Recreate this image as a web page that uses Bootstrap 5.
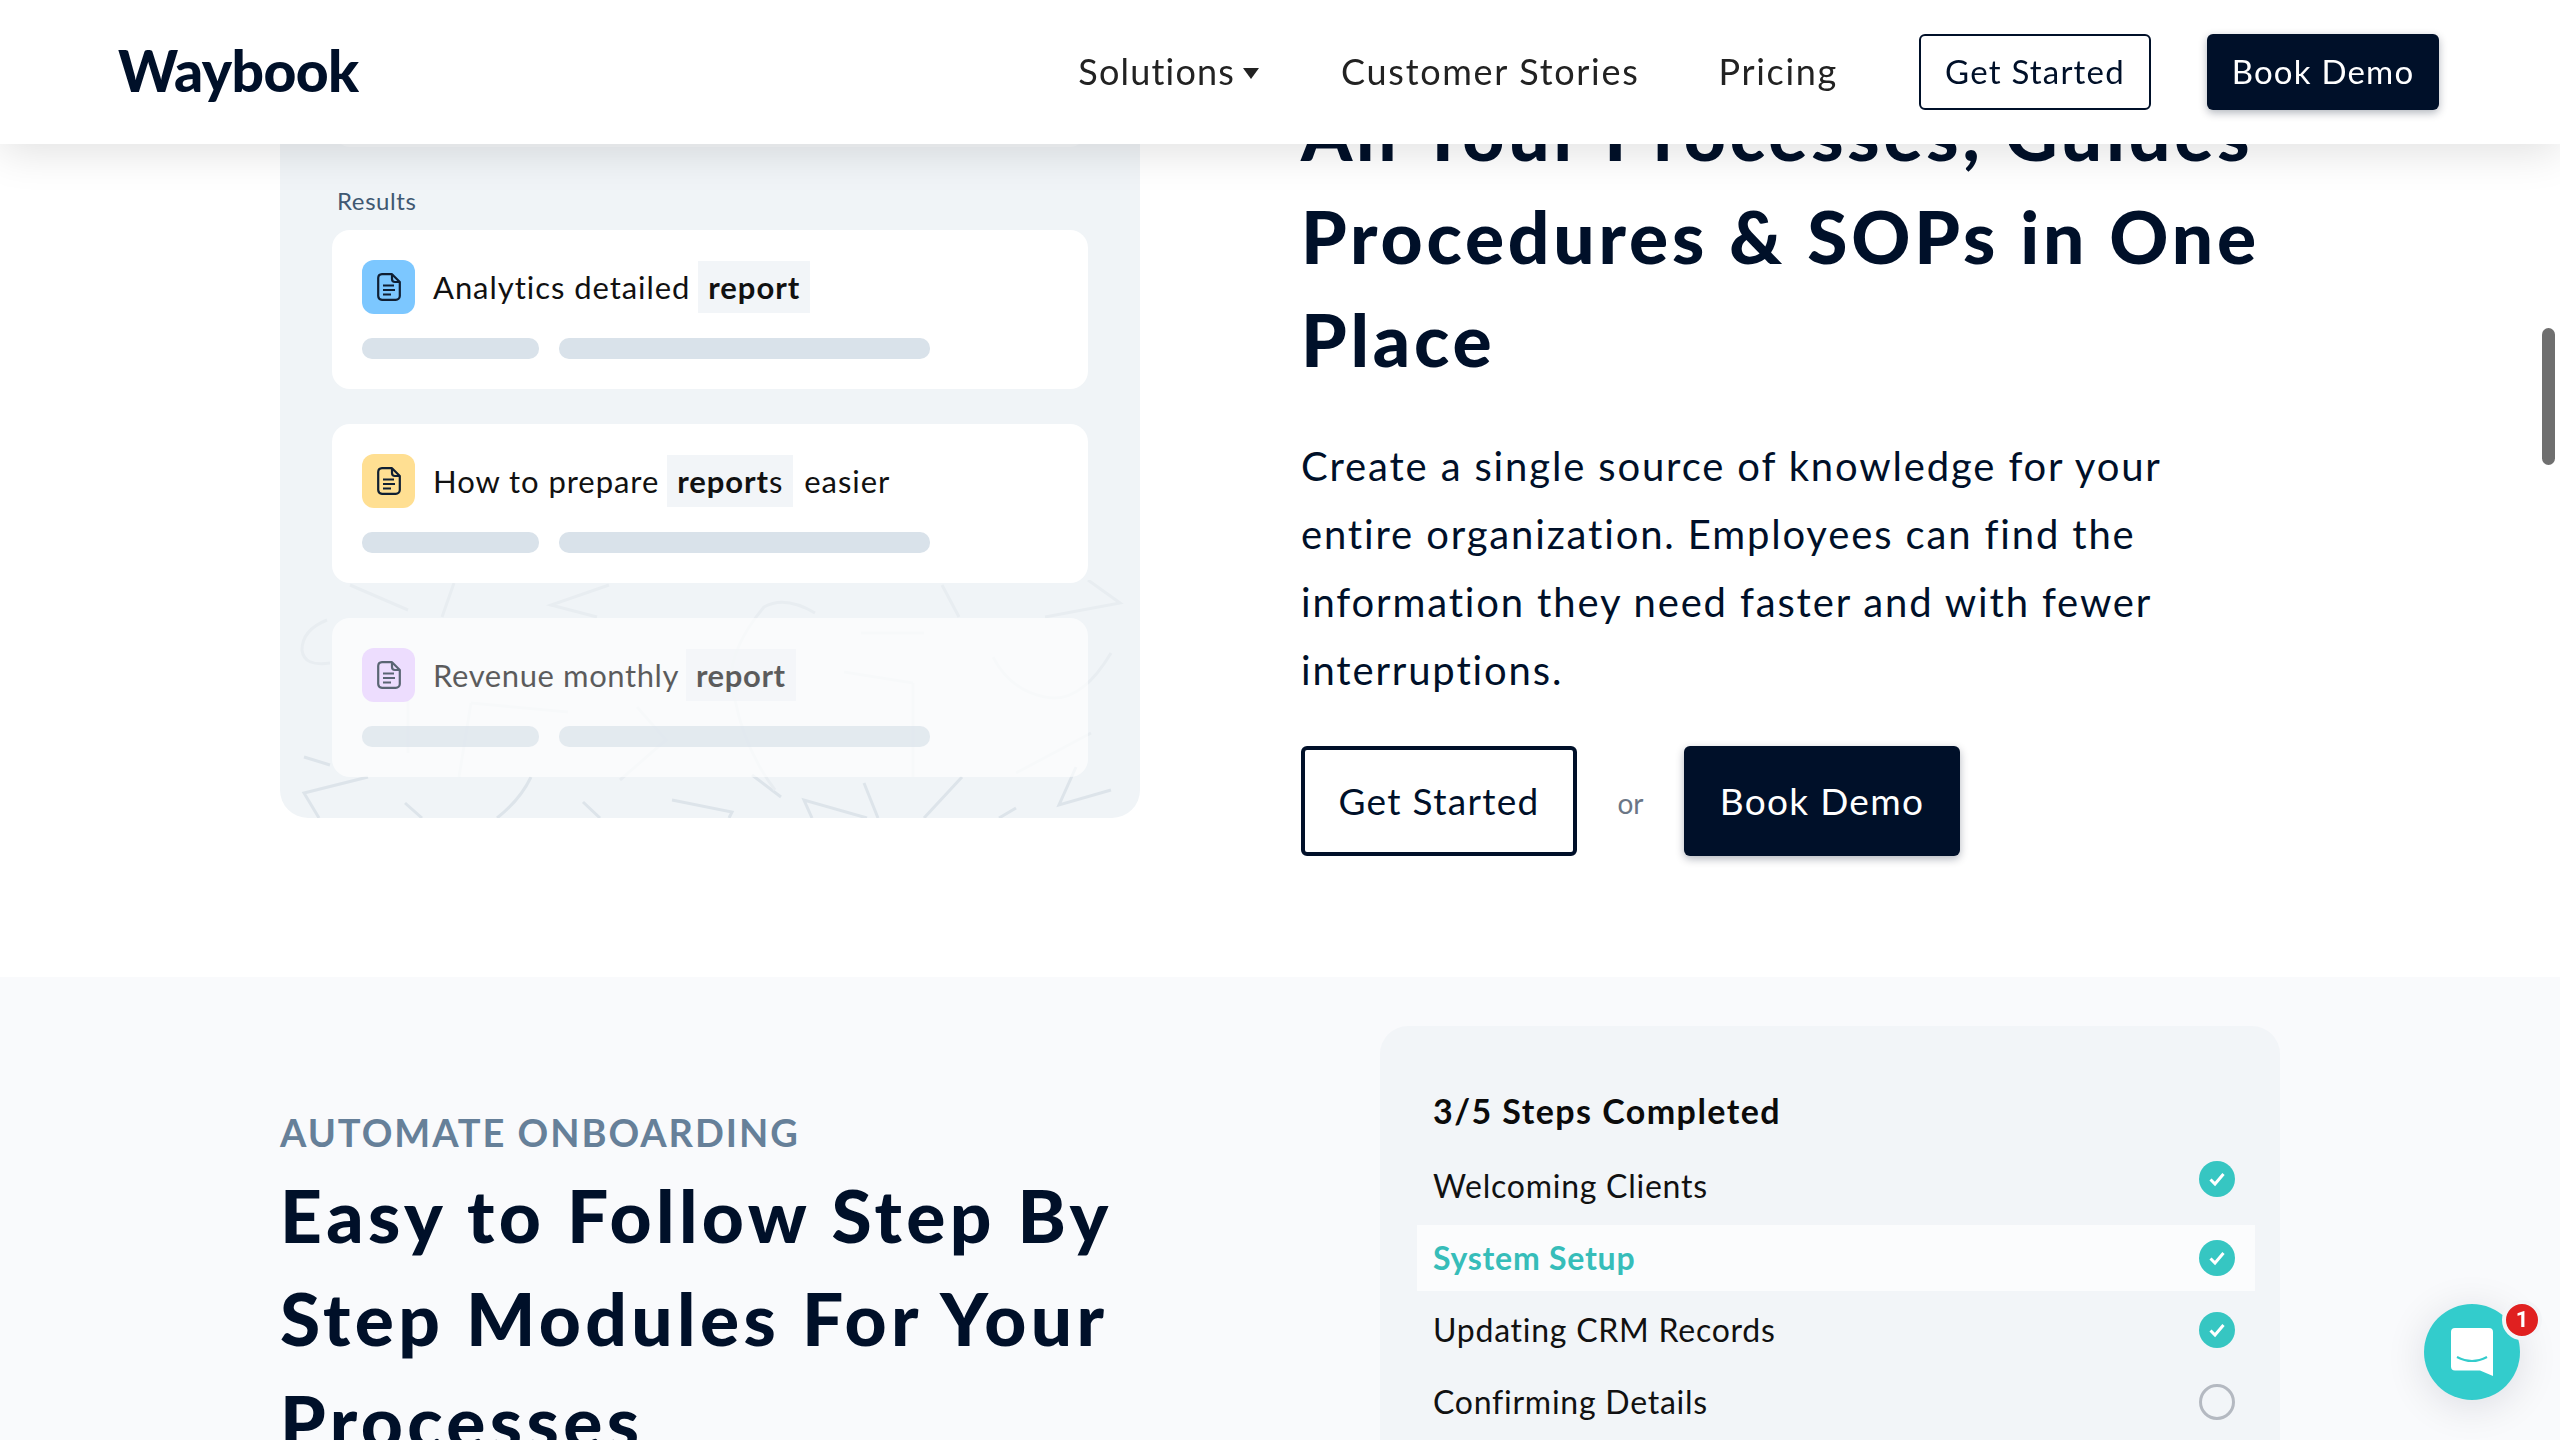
<!DOCTYPE html>
<html lang="en">
<head>
    <meta charset="UTF-8">
    <meta name="viewport" content="width=device-width, initial-scale=1.0">
    <title>Waybook</title>
    <link rel="stylesheet" href="https://cdn.jsdelivr.net/npm/bootstrap@5.3.0/dist/css/bootstrap.min.css">
    <style>
        html, body { height: 100%; overflow: hidden; }
        body { font-family: Lato, "Open Sans", sans-serif; color: #001029; background: #fff; }

        /* top bar */
        .wb-bar { height: 144px; padding: 0 121px 0 118px; box-shadow: 0 8px 40px rgba(0, 0, 0, .12); }
        .wb-logo { font-size: 57px; font-weight: 900; letter-spacing: -.6px; line-height: 1; color: #001029; text-decoration: none; padding-bottom: 3px; }
        .wb-link { font-size: 36px; color: #222; text-decoration: none; letter-spacing: 1.7px; white-space: nowrap; padding-bottom: 2px; }
        .wb-sol { letter-spacing: 1.2px; }
        .wb-l2 { margin-left: 82px; }
        .wb-l3 { margin-left: 79px; }
        .wb-l4 { margin-left: 81px; }
        .wb-l5 { margin-left: 56px; }
        .wb-caret { display: inline-block; width: 0; height: 0; border: 8px solid transparent; border-top: 11px solid #222; border-bottom: 0; margin-left: 8px; vertical-align: 6px; }
        .wb-btn { display: inline-flex; align-items: center; justify-content: center; border-radius: 6px; font-weight: 400; }
        .wb-btn-sm { width: 232px; height: 76px; font-size: 33px; letter-spacing: 1.2px; }
        .wb-btn-lg { width: 276px; height: 110px; font-size: 37px; letter-spacing: 1.3px; }
        .wb-out { background: #fff; color: #001029; border: 2px solid #001029; }
        .wb-btn-lg.wb-out { border-width: 4px; }
        .wb-fill { background: #001029; color: #fff; border: 0; box-shadow: 0 3px 8px rgba(0, 16, 41, .3); }

        .wb-page { margin-top: -60px; }
        .wb-wrap { width: 2000px; margin-left: 280px; }

        /* results panel */
        .wb-hero { height: 1037px; }
        .wb-panel { width: 860px; height: 878px; background: #f0f4f7; border-radius: 0 0 28px 28px; padding: 30px 52px 0; position: relative; overflow: hidden; }
        .wb-scribble { position: absolute; left: 0; bottom: 0; width: 860px; height: 238px; }
        .wb-search { height: 177px; margin: 0 2px; border-radius: 0 0 16px 16px; background: #f6f8fa; }
        .wb-results { font-size: 24px; color: #3f5872; margin: 39px 0 2px 5px; line-height: 30px; height: 42px; letter-spacing: .6px; }
        .wb-item { position: relative; height: 159px; background: #fff; border-radius: 18px; margin-bottom: 35px; padding: 30px 30px 0; }
        .wb-item.wb-faded { background: rgba(255, 255, 255, .66); }
        .wb-faded .wb-inner { opacity: .68; }
        .wb-ico { width: 53px; height: 54px; border-radius: 12px; flex: none; display: flex; align-items: center; justify-content: center; }
        .wb-blue { background: #7cc7ff; }
        .wb-yellow { background: #ffdf92; }
        .wb-purple { background: #e7cfff; }
        .wb-title { font-size: 31px; color: #111; margin-left: 18px; white-space: nowrap; letter-spacing: .95px; }
        .wb-faded .wb-title { letter-spacing: .6px; }
        .wb-hit { display: inline-block; background: #f2f5f8; font-weight: 700; padding: 0 10px; height: 52px; line-height: 52px; margin: 0 2px 0 -1px; }
        .wb-hit span { font-weight: 400; }
        .wb-skels { display: flex; gap: 20px; margin-top: 24px; }
        .wb-skel { height: 21px; background: #d9e2ea; border-radius: 10px; }
        .wb-skel-a { width: 177px; }
        .wb-skel-b { width: 371px; }

        /* hero copy */
        .wb-copy { width: 978px; margin-left: 161px; padding-top: 142px; flex: none; }
        .wb-head { font-size: 73px; line-height: 103px; font-weight: 900; color: #001029; margin: 0; letter-spacing: 3.8px; }
        .wb-para { font-size: 40px; line-height: 68px; margin: 41px 0 0; width: 900px; letter-spacing: 1.85px; }
        .wb-cta { display: flex; align-items: center; margin-top: 42px; }
        .wb-or { width: 107px; text-align: center; color: #6b7686; font-size: 28px; padding-top: 4px; }

        /* steps section */
        .wb-band { background: #f9fafc; padding-top: 49px; height: 600px; }
        .wb-kicker { font-size: 38px; font-weight: 700; color: #668099; letter-spacing: 1.95px; line-height: 46px; margin: 0 0 9px; }
        .wb-side { width: 1090px; padding-top: 83px; }
        .wb-side .wb-head { letter-spacing: 4.4px; }
        .wb-steps { width: 900px; height: 600px; background: #f2f5f8; border-radius: 28px; padding: 60px 25px 0 37px; }
        .wb-steps-title { font-size: 34px; font-weight: 700; color: #0b0b0b; line-height: 50px; margin: 0 0 17px 16px; letter-spacing: 1.45px; }
        .wb-row { height: 66px; margin-bottom: 6px; padding: 0 20px 0 16px; font-size: 32px; color: #111; letter-spacing: .75px; }
        .wb-row.wb-on { background: #fbfcfd; color: #36bdb9; font-weight: 700; }
        .wb-up { margin-bottom: 14px; }

        /* scrollbar and chat launcher */
        .wb-thumb { position: fixed; left: 2542px; top: 328px; width: 13px; height: 137px; border-radius: 7px; background: #6f6f6f; }
        .wb-chat { position: fixed; left: 2424px; top: 1304px; width: 96px; height: 96px; border-radius: 50%; background: #33cccc; box-shadow: 0 6px 40px rgba(0, 16, 41, .12); }
        .wb-pip { position: absolute; left: 78px; top: -4px; width: 40px; height: 40px; border-radius: 50%; background: #e02020; border: 4px solid #f3f5f8; color: #fff; font: 700 22px/32px Roboto, sans-serif; text-align: center; }
    </style>
</head>
<body>
    <svg width="0" height="0" class="position-absolute">
        <symbol id="doc" viewBox="0 0 24 28">
            <path d="M5 1.2H15L22.8 9V23a4 4 0 0 1-4 3.8H5a4 4 0 0 1-3.8-3.8V5A4 4 0 0 1 5 1.2z" fill="none" stroke="currentColor" stroke-width="2.2" stroke-linejoin="round"/>
            <path d="M15 1.2V6a3 3 0 0 0 3 3h4.8M6 12.5h11M6 17h12M6 21.5h8" fill="none" stroke="currentColor" stroke-width="2.2"/>
        </symbol>
        <symbol id="tick" viewBox="0 0 36 36">
            <circle cx="18" cy="18" r="18" fill="#36c6c2"/>
            <path d="M11.5 18.5l4.5 4.5 8.5-10" fill="none" stroke="#fff" stroke-width="3"/>
        </symbol>
    </svg>

    <nav class="navbar fixed-top bg-white wb-bar d-flex justify-content-between align-items-center flex-nowrap">
        <a class="wb-logo" href="#">Waybook</a>
        <div class="d-flex align-items-center">
            <a class="wb-link wb-sol" href="#">Solutions<i class="wb-caret"></i></a>
            <a class="wb-link wb-l2" href="#">Customer Stories</a>
            <a class="wb-link wb-l3" href="#">Pricing</a>
            <a class="wb-btn wb-btn-sm wb-out text-decoration-none wb-l4" href="#">Get Started</a>
            <a class="wb-btn wb-btn-sm wb-fill text-decoration-none wb-l5" href="#">Book Demo</a>
        </div>
    </nav>

    <main class="wb-page">
        <section class="wb-hero">
            <div class="wb-wrap d-flex">
                <div class="wb-panel flex-shrink-0">
                    <svg class="wb-scribble" viewBox="0 0 860 238" fill="none" stroke-width="3">
                        <path stroke="#dde4ea" d="M88 197L24 213L39 238M24 177L50 185M125 223L142 238M251 197Q240 220 217 238M303 222L320 238M392 220L452 232L449 238M472 195L501 217M532 238L524 220L587 238M584 203L598 238M682 197L644 238M736 228L719 238M831 210L779 225L796 187"/>
                        <path stroke="#e8edf1" d="M70 5L128 30M174 3L162 37M329 5L271 25L317 37M662 5L679 37M808 0L840 23L765 37M47 40Q22 50 22 70Q24 87 50 83M831 73Q800 125 765 117Q730 110 713 77M535 33Q505 15 484 27Q440 80 455 120Q465 170 495 210M128 120V173M191 123L179 197M191 123L288 132M357 127L386 160L340 200M633 103V197M564 92L633 103M581 53H644M811 153L736 193"/>
                    </svg>
                    <div class="wb-search position-relative"></div>
                    <div class="wb-results position-relative">Results</div>
                    <div class="wb-item">
                        <div class="wb-inner">
                            <div class="d-flex align-items-center">
                                <span class="wb-ico wb-blue"><svg width="24" height="28" color="#0f1f33"><use href="#doc"/></svg></span>
                                <span class="wb-title">Analytics detailed <span class="wb-hit">report</span></span>
                            </div>
                            <div class="wb-skels"><div class="wb-skel wb-skel-a"></div><div class="wb-skel wb-skel-b"></div></div>
                        </div>
                    </div>
                    <div class="wb-item">
                        <div class="wb-inner">
                            <div class="d-flex align-items-center">
                                <span class="wb-ico wb-yellow"><svg width="24" height="28" color="#0f1f33"><use href="#doc"/></svg></span>
                                <span class="wb-title">How to prepare <span class="wb-hit">report<span>s</span></span> easier</span>
                            </div>
                            <div class="wb-skels"><div class="wb-skel wb-skel-a"></div><div class="wb-skel wb-skel-b"></div></div>
                        </div>
                    </div>
                    <div class="wb-item wb-faded">
                        <div class="wb-inner">
                            <div class="d-flex align-items-center">
                                <span class="wb-ico wb-purple"><svg width="24" height="28" color="#0f1f33"><use href="#doc"/></svg></span>
                                <span class="wb-title">Revenue monthly <span class="wb-hit">report</span></span>
                            </div>
                            <div class="wb-skels"><div class="wb-skel wb-skel-a"></div><div class="wb-skel wb-skel-b"></div></div>
                        </div>
                    </div>
                </div>
                <div class="wb-copy">
                    <h1 class="wb-head">All Your Processes, Guides Procedures &amp; SOPs in One Place</h1>
                    <p class="wb-para">Create a single source of knowledge for your entire organization. Employees can find the information they need faster and with fewer interruptions.</p>
                    <div class="wb-cta">
                        <a class="wb-btn wb-btn-lg wb-out text-decoration-none" href="#">Get Started</a>
                        <span class="wb-or">or</span>
                        <a class="wb-btn wb-btn-lg wb-fill text-decoration-none" href="#">Book Demo</a>
                    </div>
                </div>
            </div>
        </section>

        <section class="wb-band">
            <div class="wb-wrap d-flex justify-content-between">
                <div class="wb-side">
                    <p class="wb-kicker">AUTOMATE ONBOARDING</p>
                    <h2 class="wb-head">Easy to Follow Step By<br>Step Modules For Your<br>Processes</h2>
                </div>
                <div class="wb-steps flex-shrink-0">
                    <div class="wb-steps-title">3/5 Steps Completed</div>
                    <div class="wb-row d-flex justify-content-between align-items-center">Welcoming Clients <svg class="wb-up" width="36" height="36"><use href="#tick"/></svg></div>
                    <div class="wb-row wb-on d-flex justify-content-between align-items-center">System Setup <svg width="36" height="36"><use href="#tick"/></svg></div>
                    <div class="wb-row d-flex justify-content-between align-items-center">Updating CRM Records <svg width="36" height="36"><use href="#tick"/></svg></div>
                    <div class="wb-row d-flex justify-content-between align-items-center">Confirming Details <svg width="36" height="36"><circle cx="18" cy="18" r="16.5" fill="none" stroke="#b4b9c1" stroke-width="3"/></svg></div>
                </div>
            </div>
        </section>
    </main>

    <div class="wb-thumb"></div>
    <div class="wb-chat">
        <svg width="96" height="96" viewBox="0 0 96 96">
            <path d="M31 24H65a4 4 0 0 1 4 4V72L56 66.5H31a4 4 0 0 1-4-4V28a4 4 0 0 1 4-4z" fill="#fff"/>
            <path d="M33 53Q48 61 63 53" fill="none" stroke="#33cccc" stroke-width="2.2"/>
        </svg>
        <span class="wb-pip">1</span>
    </div>

    <script src="https://cdn.jsdelivr.net/npm/bootstrap@5.3.0/dist/js/bootstrap.bundle.min.js"></script>
</body>
</html>
